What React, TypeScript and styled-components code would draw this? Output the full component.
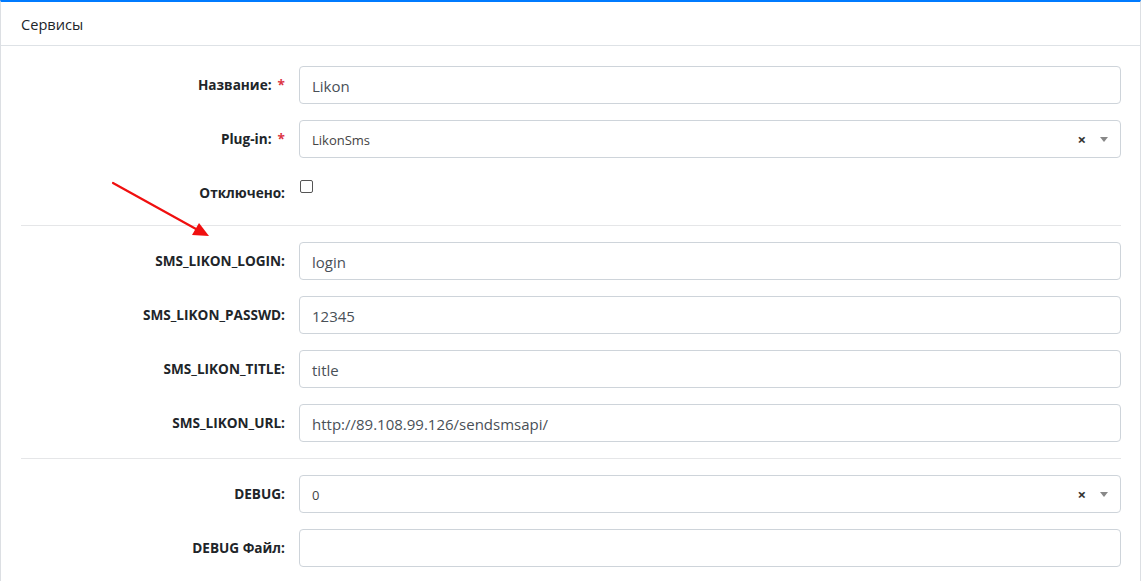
import React from 'react';
import styled, { createGlobalStyle } from 'styled-components';

const GlobalStyle = createGlobalStyle`
  html, body {
    margin: 0;
    padding: 0;
    background: #ffffff;
    font-family: "Open Sans", "Noto Sans", sans-serif;
    color: #212529;
  }
`;

const Page = styled.div`
  position: relative;
  width: 1143px;
  height: 581px;
  overflow: hidden;
`;

const Card = styled.div`
  width: 1141px;
  box-sizing: border-box;
  border-top: 2px solid #007bff;
  border-left: 1px solid #dcdfe3;
  border-right: 1px solid #dcdfe3;
  background: #fff;
`;

const CardHeader = styled.div`
  padding: 11px 20px 9px;
  font-size: 14.6px;
  line-height: 23px;
  color: #212529;
  border-bottom: 1px solid #dee2e6;
`;

const CardBody = styled.div`
  padding: 20px 19px 20px 20px;
`;

const Row = styled.div`
  display: grid;
  grid-template-columns: 264px 1fr;
  column-gap: 14px;
  margin-bottom: 16px;
`;

const Label = styled.label`
  font-size: 13.6px;
  font-weight: 700;
  text-align: right;
  line-height: 21px;
  padding: 8px 0 6px;
  white-space: nowrap;
  color: #212529;
`;

const Req = styled.span`
  color: #dc3545;
  margin-left: 6px;
`;

const Input = styled.div`
  height: 38px;
  box-sizing: border-box;
  border: 1px solid #ced4da;
  border-radius: 4px;
  padding: 1px 12px 0;
  display: flex;
  align-items: center;
  font-size: 15px;
  color: #495057;
`;

const Select = styled(Input)`
  font-size: 13px;
  color: #444;
  justify-content: space-between;
  padding-right: 12px;
`;

const SelectTools = styled.div`
  display: flex;
  align-items: center;
  gap: 14px;
`;

const Clear = styled.span`
  font-size: 15px;
  font-weight: 700;
  color: #333;
  line-height: 1;
`;

const Caret = styled.span`
  width: 0;
  height: 0;
  border-left: 4px solid transparent;
  border-right: 4px solid transparent;
  border-top: 5px solid #888;
`;

const CheckCell = styled.div`
  padding-top: 6px;
`;

const Checkbox = styled.span`
  display: block;
  width: 11px;
  height: 11px;
  border: 1px solid #555;
  border-radius: 2px;
  margin-left: 1px;
`;

const Divider = styled.hr`
  border: 0;
  border-top: 1px solid #e5e6e8;
  margin: 0 0 16px;
`;

const Arrow = styled.svg`
  position: absolute;
  left: 108px;
  top: 178px;
`;

const TextRow: React.FC<{ label: string; value?: string; required?: boolean }> = ({ label, value, required }) => (
  <Row>
    <Label>
      {label}
      {required && <Req>*</Req>}
    </Label>
    <Input>{value}</Input>
  </Row>
);

const SelectRow: React.FC<{ label: string; value: string; required?: boolean }> = ({ label, value, required }) => (
  <Row>
    <Label>
      {label}
      {required && <Req>*</Req>}
    </Label>
    <Select>
      <span>{value}</span>
      <SelectTools>
        <Clear>×</Clear>
        <Caret />
      </SelectTools>
    </Select>
  </Row>
);

const App: React.FC = () => {
  return (
    <Page>
      <GlobalStyle />
      <Card>
        <CardHeader>Сервисы</CardHeader>
        <CardBody>
          <TextRow label="Название:" value="Likon" required />
          <SelectRow label="Plug-in:" value="LikonSms" required />
          <Row>
            <Label>Отключено:</Label>
            <CheckCell>
              <Checkbox />
            </CheckCell>
          </Row>
          <Divider />
          <TextRow label="SMS_LIKON_LOGIN:" value="login" />
          <TextRow label="SMS_LIKON_PASSWD:" value="12345" />
          <TextRow label="SMS_LIKON_TITLE:" value="title" />
          <TextRow label="SMS_LIKON_URL:" value="http://89.108.99.126/sendsmsapi/" />
          <Divider />
          <SelectRow label="DEBUG:" value="0" />
          <TextRow label="DEBUG Файл:" />
        </CardBody>
      </Card>
      {/* red pointer drawn over the form */}
      <Arrow width="110" height="70" viewBox="0 0 110 70">
        <line x1="5" y1="5" x2="88" y2="51" stroke="#f00f0f" strokeWidth="2.2" strokeLinecap="round" />
        <polygon points="101,58 84,57 91,45" fill="#f00f0f" />
      </Arrow>
    </Page>
  );
};

export default App;
